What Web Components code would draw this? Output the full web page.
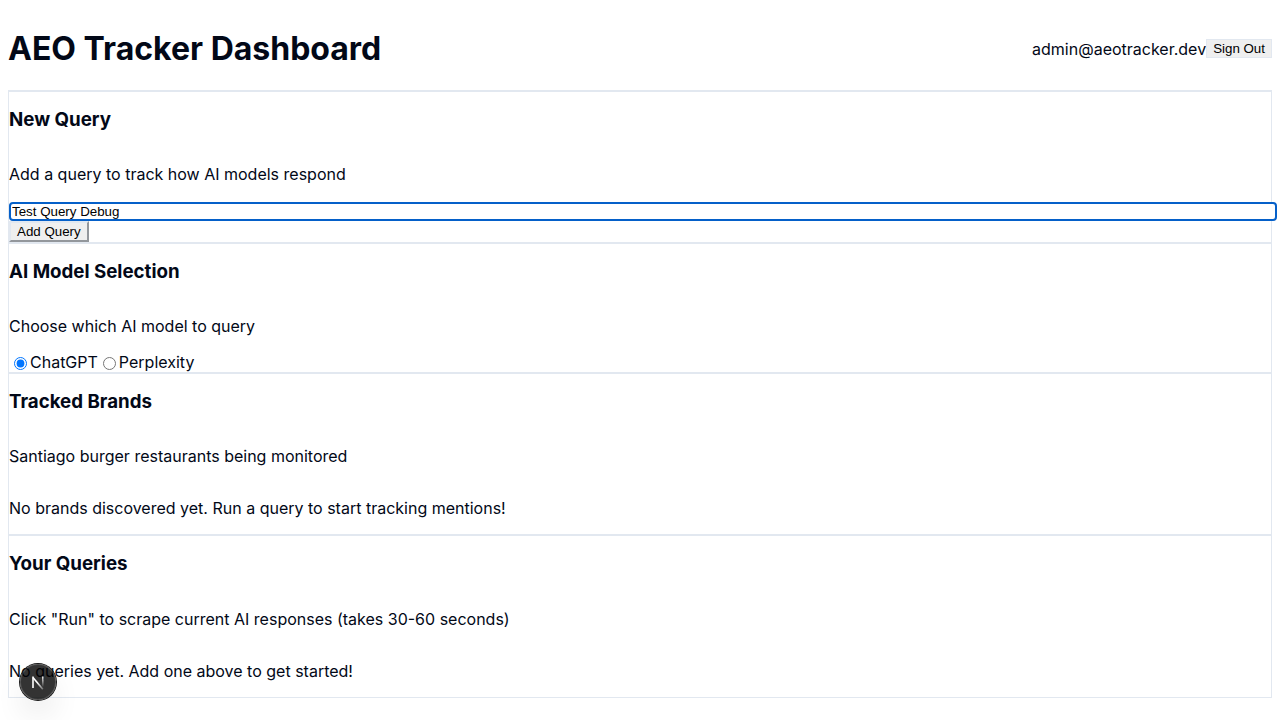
<!DOCTYPE html>
<html lang="en">
<head>
<meta charset="utf-8">
<meta name="viewport" content="width=device-width, initial-scale=1">
<title>AEO Tracker Dashboard</title>
<style>
  body {
    --border: #e2e8f0;
    --focus: #0560c9;
    margin: 0;
    background: #fff;
    color: #020817;
    font: 16px Inter, sans-serif;
  }
</style>
</head>
<body>
<dashboard-page></dashboard-page>

<script>
const define = (name, html, setup) => {
  const template = document.createElement('template');
  template.innerHTML = html;
  customElements.define(name, class extends HTMLElement {
    constructor() {
      super();
      this.attachShadow({ mode: 'open' }).append(template.content.cloneNode(true));
      if (setup) setup(this.shadowRoot, this);
    }
  });
};

define('app-header', `
  <style>
    :host { display: block; border-bottom: 1px solid var(--border); }
    header { display: flex; align-items: center; justify-content: space-between; }
    h1 { font-size: 32px; margin: 21px 0; line-height: 40px; }
    .account { display: flex; align-items: flex-start; line-height: 20px; }
  </style>
  <header>
    <h1><slot name="title"></slot></h1>
    <div class="account"><slot></slot></div>
  </header>`);

define('app-button', `
  <style>
    :host { display: block; }
    button {
      display: block;
      font-family: "Liberation Sans", Arial, sans-serif;
      color: #000;
      background: #efefef;
      border: 2px outset var(--border);
      border-radius: 0;
      padding: 1px 6px;
    }
    :host([variant="outline"]) button { border: 1px solid var(--border); }
  </style>
  <button type="button"><slot></slot></button>`);

define('app-card', `
  <style>
    :host { display: block; border: 1px solid var(--border); }
    .head { display: flex; flex-direction: column; }
    h3 { line-height: 1; }
    p { margin: 16px 0; line-height: 20px; }
  </style>
  <section>
    <div class="head">
      <h3><slot name="title"></slot></h3>
      <p><slot name="description"></slot></p>
    </div>
    <slot></slot>
  </section>`);

define('empty-message', `
  <style>
    :host { display: flex; }
    p { margin: 16px 0; line-height: 20px; }
  </style>
  <p><slot></slot></p>`);

define('query-form', `
  <style>
    :host { display: block; }
    form { padding-top: 2px; }
    input {
      display: block;
      width: 100%;
      height: 15px;
      padding: 0 1px;
      border: 2px solid var(--focus);
      border-radius: 4px;
      outline: none;
      background: #fff;
      color: #000;
      font-family: "Liberation Sans", Arial, sans-serif;
    }
  </style>
  <form>
    <input type="text" aria-label="Query" value="Test Query Debug">
    <app-button>Add Query</app-button>
  </form>`);

define('model-picker', `
  <style>
    :host { display: block; }
    .options { display: flex; align-items: center; height: 20px; }
    input { width: 13px; height: 13px; margin: 3px 3px 0 5px; accent-color: #0075ff; }
  </style>
  <div class="options" role="radiogroup" aria-label="AI model">
    <input type="radio" id="chatgpt" name="model" checked><label for="chatgpt">ChatGPT</label>
    <input type="radio" id="perplexity" name="model"><label for="perplexity">Perplexity</label>
  </div>`);

define('dev-badge', `
  <style>
    :host { position: fixed; left: 20px; bottom: 20px; }
    button {
      display: block;
      width: 36px;
      height: 36px;
      padding: 0;
      border: 0;
      border-radius: 50%;
      background: rgba(0, 0, 0, .8);
      box-shadow: 0 0 0 1px #171717, inset 0 0 0 1px rgba(255, 255, 255, .14), 0 16px 32px -8px rgba(0, 0, 0, .24);
    }
    svg { display: block; width: 36px; height: 36px; }
  </style>
  <button type="button" aria-label="Open developer tools">
    <svg viewBox="0 0 36 36" fill="none" stroke-width="1.6">
      <defs>
        <linearGradient id="diagonal" gradientUnits="userSpaceOnUse" x1="18" y1="18" x2="24" y2="26">
          <stop stop-color="#fff"/><stop offset="1" stop-color="#fff" stop-opacity="0.2"/>
        </linearGradient>
        <linearGradient id="stem" gradientUnits="userSpaceOnUse" x1="22" y1="12" x2="22" y2="23">
          <stop stop-color="#fff"/><stop offset="1" stop-color="#fff" stop-opacity="0"/>
        </linearGradient>
      </defs>
      <path d="M13 13.5L22.8 25.3" stroke="url(#diagonal)"/>
      <path d="M13 24V12.5" stroke="#fff"/>
      <path d="M22.8 12.5V23" stroke="url(#stem)"/>
    </svg>
  </button>`);

define('dashboard-page', `
  <style>:host { display: block; padding: 8px; }</style>
  <app-header>
    <span slot="title">AEO Tracker Dashboard</span>
    <span>admin@aeotracker.dev</span>
    <app-button variant="outline">Sign Out</app-button>
  </app-header>
  <main>
    <app-card>
      <span slot="title">New Query</span>
      <span slot="description">Add a query to track how AI models respond</span>
      <query-form></query-form>
    </app-card>
    <app-card>
      <span slot="title">AI Model Selection</span>
      <span slot="description">Choose which AI model to query</span>
      <model-picker></model-picker>
    </app-card>
    <app-card>
      <span slot="title">Tracked Brands</span>
      <span slot="description">Santiago burger restaurants being monitored</span>
      <empty-message>No brands discovered yet. Run a query to start tracking mentions!</empty-message>
    </app-card>
    <app-card>
      <span slot="title">Your Queries</span>
      <span slot="description">Click "Run" to scrape current AI responses (takes 30-60 seconds)</span>
      <empty-message>No queries yet. Add one above to get started!</empty-message>
    </app-card>
  </main>
  <dev-badge></dev-badge>`);
</script>
</body>
</html>
